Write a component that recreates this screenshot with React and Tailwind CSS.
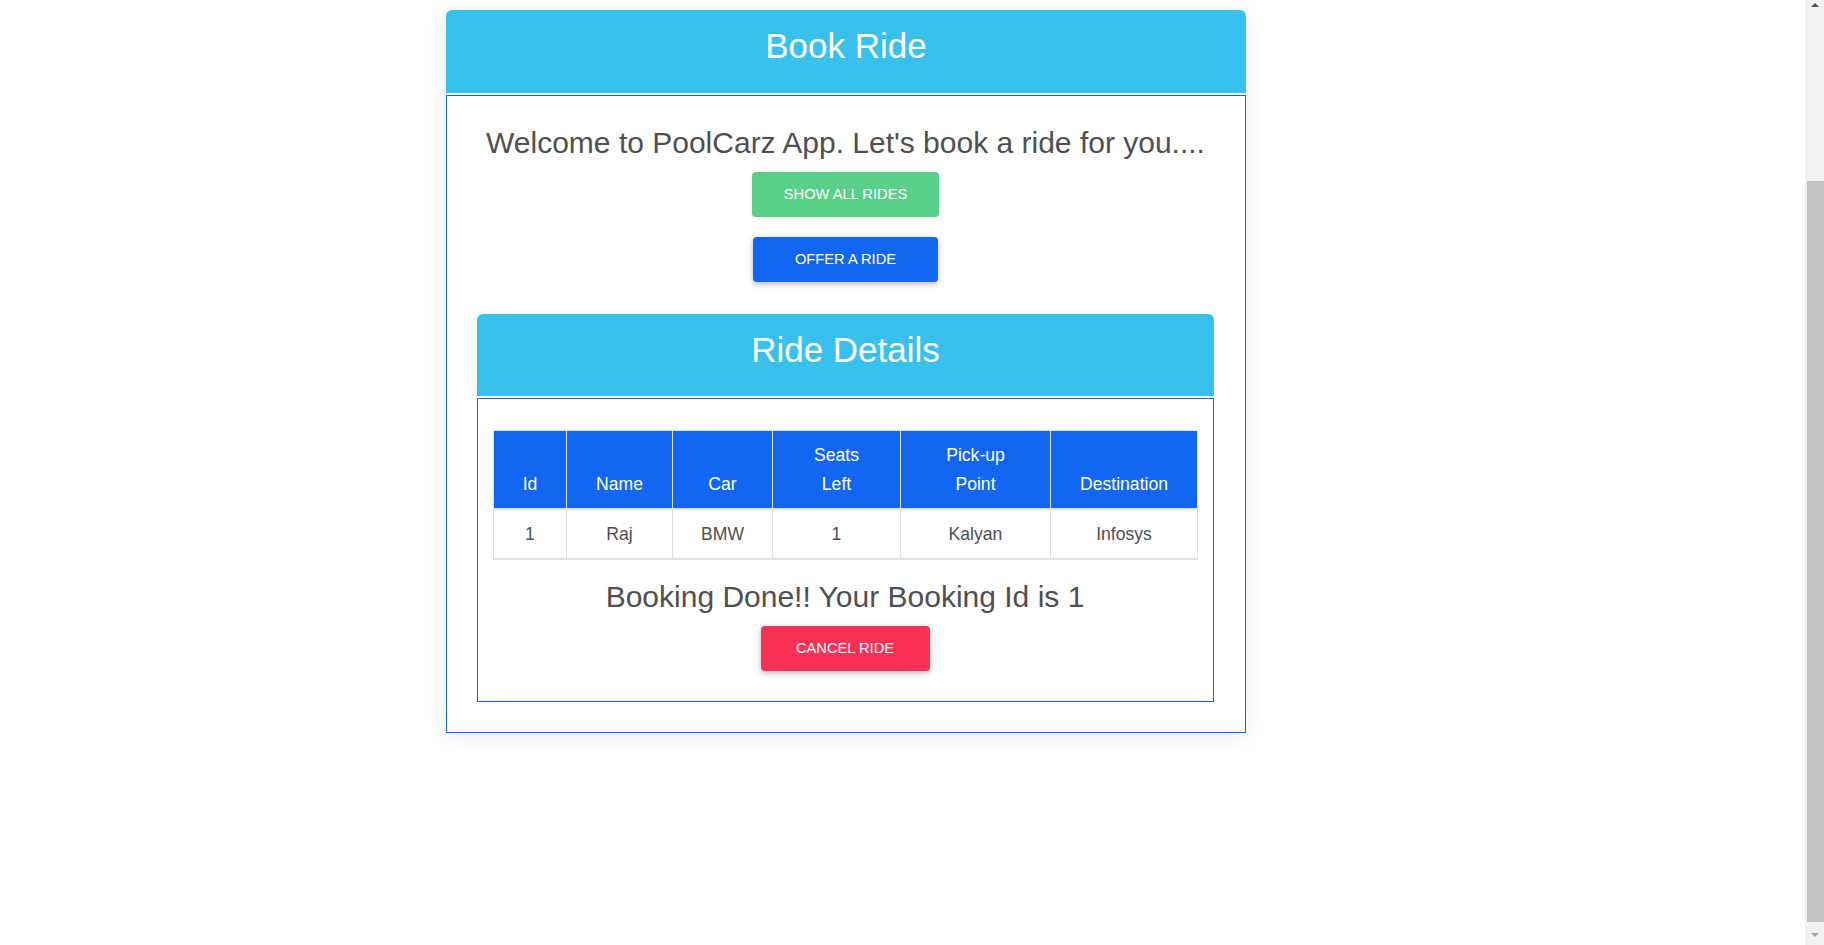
const ride = { id: 1, name: 'Raj', car: 'BMW', seats: 1, pickup: 'Kalyan', destination: 'Infosys' }

const columns = [
  { label: 'Id', width: 'w-[73px]' },
  { label: 'Name', width: 'w-[106px]' },
  { label: 'Car', width: 'w-[100px]' },
  { label: ['Seats', 'Left'], width: 'w-[128px]' },
  { label: ['Pick-up', 'Point'], width: 'w-[150px]' },
  { label: 'Destination', width: 'w-[147px]' },
]

function CardHeader({ title, height }) {
  return (
    <div className={`${height} rounded-t-[6px] bg-[#39c0ed] pt-[15px] text-center text-[35px] leading-[42px] text-white`}>
      {title}
    </div>
  )
}

function Button({ children, color, width, disabled }) {
  return (
    <button
      type="button"
      className={`${color} ${width} h-[45px] rounded-[4px] text-[14.7px] uppercase text-white ${
        disabled
          ? 'shadow-[0_2px_4px_rgba(0,0,0,0.06)]'
          : 'shadow-[0_2px_5px_0_rgba(0,0,0,0.2),0_2px_10px_0_rgba(0,0,0,0.1)]'
      }`}
    >
      {children}
    </button>
  )
}

function RideTable() {
  const cells = [ride.id, ride.name, ride.car, ride.seats, ride.pickup, ride.destination]
  return (
    <table className="w-full table-fixed border-collapse border border-[#e0e0e0] text-[17.6px] leading-[28.5px]">
      <thead>
        <tr className="bg-[#1266f1] text-white">
          {columns.map((col, i) => (
            <th
              key={i}
              className={`${col.width} border border-b-2 border-[#e0e0e0] px-2 py-[10px] align-bottom font-normal`}
            >
              {Array.isArray(col.label) ? (
                <>
                  {col.label[0]}
                  <br />
                  {col.label[1]}
                </>
              ) : (
                col.label
              )}
            </th>
          ))}
        </tr>
      </thead>
      <tbody>
        <tr className="border-b-2 border-[#e0e0e0] text-[#4f4f4f]">
          {cells.map((c, i) => (
            <td key={i} className="border border-b-2 border-[#e0e0e0] px-2 py-[9.5px] text-center">
              {c}
            </td>
          ))}
        </tr>
      </tbody>
    </table>
  )
}

function Scrollbar() {
  return (
    <div className="flex h-screen w-[19px] flex-col bg-[#f1f1f1]">
      <div className="flex h-[17px] items-start justify-center pt-[3px]">
        <div className="h-0 w-0 border-x-[4px] border-b-[4px] border-x-transparent border-b-[#505050]" />
      </div>
      <div className="mt-[164px] ml-[2px] h-[741px] bg-[#c1c1c1]" />
      <div className="flex flex-1 items-end justify-center pb-[8px]">
        <div className="h-0 w-0 border-x-[4px] border-t-[4px] border-x-transparent border-t-[#a3a3a3]" />
      </div>
    </div>
  )
}

export default function App() {
  return (
    <div className="flex h-screen overflow-hidden bg-white font-['Liberation_Sans',Arial,sans-serif]">
      <div className="flex-1 pt-[10px]">
        <div className="ml-[446px] w-[800px] shadow-[0_4px_22px_rgba(0,0,0,0.08)]">
          <CardHeader title="Book Ride" height="h-[83px]" />
          <div className="mt-[2px] border border-[#1266f1] pt-[29px] pr-[31px] pb-[30px] pl-[30px]">
            <h4 className="text-center text-[30px] leading-[36px] text-[#4f4f4f]">
              Welcome to PoolCarz App. Let's book a ride for you....
            </h4>
            <div className="mt-[11px] flex flex-col items-center gap-[20px]">
              <Button color="bg-[#59d089]" width="w-[187px]" disabled>
                Show all rides
              </Button>
              <Button color="bg-[#1266f1]" width="w-[185px]">
                Offer a ride
              </Button>
            </div>

            <div className="mt-[32px]">
              <CardHeader title="Ride Details" height="h-[82px]" />
              <div className="mt-[2px] border border-[#1266f1] pt-[31px] pr-[16px] pb-[30px] pl-[15px]">
                <RideTable />
                <h4 className="mt-[19.5px] text-center text-[30px] leading-[36px] text-[#4f4f4f]">
                  Booking Done!! Your Booking Id is 1
                </h4>
                <div className="mt-[11px] flex justify-center">
                  <Button color="bg-[#f93154]" width="w-[169px]">
                    Cancel ride
                  </Button>
                </div>
              </div>
            </div>
          </div>
        </div>
      </div>
      <Scrollbar />
    </div>
  )
}
